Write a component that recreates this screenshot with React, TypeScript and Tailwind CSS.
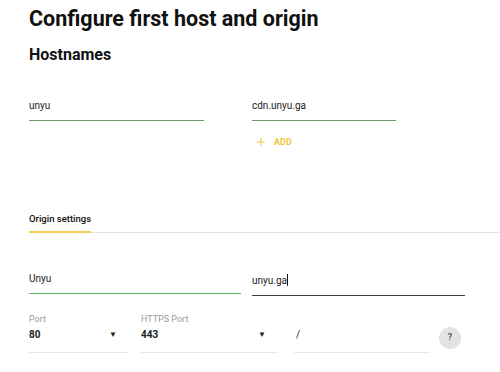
import { Plus } from "lucide-react";

const font = { fontFamily: "Roboto, 'Liberation Sans', sans-serif" };

function Field({ value, w, line, cursor }: { value: string; w: string; line: string; cursor?: boolean }) {
  return (
    <div className={`${w} border-b ${line} pb-[7px] text-[10px] leading-[14px] text-[#222]`}>
      <span>{value}</span>
      {cursor && <span className="inline-block h-[12px] w-px translate-y-[2px] bg-[#111]" />}
    </div>
  );
}

function Select({ label, value, w }: { label: string; value: string; w: string }) {
  return (
    <div className={`${w} border-b border-[#e6e6e6] pb-[10px]`}>
      <div className="text-[9px] leading-[11px] text-[#9a9a9a]">{label}</div>
      <div className="mt-[3px] flex items-center justify-between pr-[12px] text-[10px] font-bold leading-[14px] text-[#222]">
        <span>{value}</span>
        <span className="text-[8px]">▼</span>
      </div>
    </div>
  );
}

export default function App() {
  return (
    <div className="h-[372px] w-[500px] overflow-hidden bg-white" style={font}>
      <div className="pl-[29px] pt-[5px]">
        <h1 className="text-[21.5px] font-bold leading-[28px] text-[#111]">Configure first host and origin</h1>
        <h2 className="mt-[12px] text-[16px] font-bold leading-[20px] text-[#111]">Hostnames</h2>

        <div className="mt-[34px] flex items-start gap-[48px]">
          <Field value="unyu" w="w-[175px]" line="border-[#6a9a6e]" />
          <div>
            <Field value="cdn.unyu.ga" w="w-[144px]" line="border-[#6a9a6e]" />
            <button className="mt-[15px] flex items-center gap-[7px] pl-[3px] text-[9px] font-bold leading-[12px] text-[#f2c443]">
              <Plus className="h-[12px] w-[12px]" strokeWidth={2} />
              ADD
            </button>
          </div>
        </div>

        <div className="mt-[64px] flex border-b border-[#e2e2e2]">
          <div className="-mb-px w-[62px] whitespace-nowrap border-b-2 border-[#f4cf57] pb-[6px] text-[9.5px] font-medium leading-[13px] text-[#111]">
            Origin settings
          </div>
        </div>

        <div className="mt-[39px] flex items-start gap-[11px]">
          <Field value="Unyu" w="w-[212px]" line="border-[#5fae62]" />
          <Field value="unyu.ga" w="w-[213px]" line="border-[#3a3f44]" cursor />
        </div>

        <div className="mt-[18px] flex items-end">
          <Select label="Port" value="80" w="w-[100px]" />
          <div className="w-[12px]" />
          <Select label="HTTPS Port" value="443" w="w-[137px]" />
          <div className="w-[16px]" />
          <div className="w-[136px] border-b border-[#e6e6e6] pb-[10px] pl-[2px] text-[10px] leading-[14px] text-[#222]">/</div>
          <div className="mb-[4px] ml-[9px] flex h-[22px] w-[22px] items-center justify-center rounded-full bg-[#e3e3e3] text-[9px] font-medium text-[#444]">
            ?
          </div>
        </div>
      </div>
    </div>
  );
}
